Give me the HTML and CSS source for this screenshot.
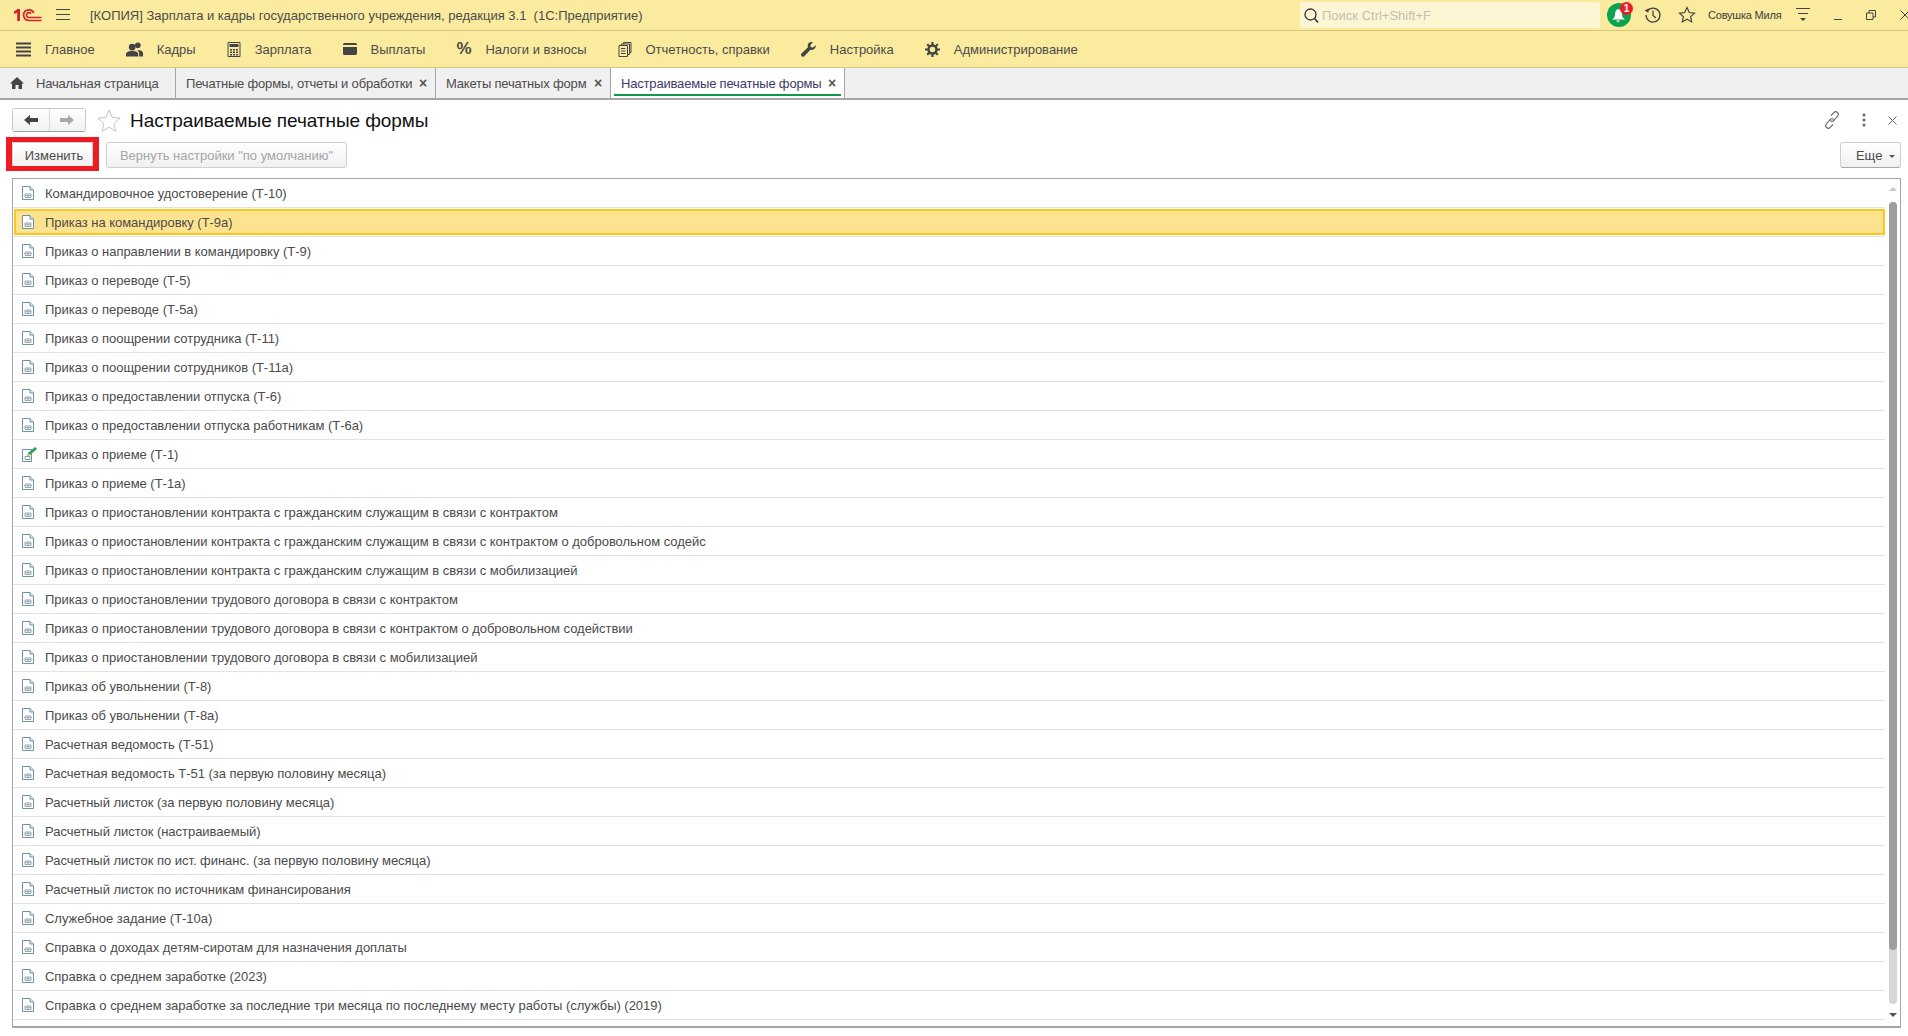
FILE: index.html
```html
<!DOCTYPE html>
<html lang="ru">

<head>
  <meta charset="UTF-8">
  <title>Настраиваемые печатные формы</title>
  <link rel="stylesheet" href="styles.css">
</head>

<body>
  <!-- Shared icons -->
  <svg class="defs" width="0" height="0">
    <symbol id="doc" viewBox="0 0 12 14">
      <path d="M.5.5h7.500l3.500 3.500v9.500H.5z" fill="#fff" stroke="#6d93a6"/>
      <path d="M8 .5V4h3.500" fill="#dbe6eb" stroke="#6d93a6"/>
      <path d="M3 8h6v3.500H3zM3 9.700h6M6 8v3.500" fill="none" stroke="#9aa8b0"/>
    </symbol>
  </svg>

  <div class="app">
    <!-- Title bar -->
    <header class="titlebar">
      <svg class="logo" width="30" height="14" viewBox="0 0 30 14">
        <path d="M1 3.500 4.500 1H7v12H4.200V4.500L1 6z" fill="#d6232b"/>
        <path d="M28.500 12.500H16a5.300 5.300 0 1 1 4.800-7.500M28.500 9.500H16a2.400 2.400 0 1 1 2-3.700" fill="none" stroke="#d6232b" stroke-width="1.700"/>
      </svg>
      <svg class="burger" width="14" height="12" viewBox="0 0 14 12">
        <path d="M0 .5h14M0 5.500h14M0 10.500h14" stroke="#444" stroke-width="1"/>
      </svg>
      <div class="app-title">[КОПИЯ] Зарплата и кадры государственного учреждения, редакция 3.1&nbsp; (1С:Предприятие)</div>
      <div class="search">
        <svg width="17" height="17" viewBox="0 0 17 17">
          <circle cx="7.500" cy="7.500" r="5.500" fill="none" stroke="#333" stroke-width="1.300"/>
          <path d="m11.500 11.500 3.500 4" stroke="#333" stroke-width="1.600"/>
        </svg>
        <span>Поиск Ctrl+Shift+F</span>
      </div>
      <div class="bell">
        <svg width="24" height="24" viewBox="0 0 24 24">
          <circle cx="12" cy="12" r="12" fill="#0da24f"/>
          <path d="M11 6c-2 .5-3 3-3 5.500 0 2-1 4-3 5h13c-2-1-3-3-3-5C15 9 14 6.500 11 6zM9 17.500h4l-2 2z" fill="#fff"/>
        </svg>
        <span class="badge">1</span>
      </div>
      <svg class="history" width="20" height="20" viewBox="0 0 20 20">
        <path d="M4.300 6A7 7 0 1 1 3 10" fill="none" stroke="#444" stroke-width="1.300"/>
        <path d="M1.500 5.500 5.500 3.500 5.500 7.800z" fill="#444"/>
        <path d="M10 5.500V10.500L13 13" fill="none" stroke="#444" stroke-width="1.300"/>
      </svg>
      <svg class="fav" width="18" height="18" viewBox="0 0 18 18">
        <path d="m9 1.500 2.300 5 5.200.6-3.900 3.500 1.100 5.300L9 13.200l-4.700 2.700 1.100-5.300L1.500 7.100l5.200-.6z" fill="none" stroke="#444" stroke-width="1.200"/>
      </svg>
      <span class="user">Совушка Миля</span>
      <svg class="user-menu" width="16" height="14" viewBox="0 0 16 14">
        <path d="M1 .5h14M3 5.500h10" stroke="#444"/>
        <path d="m5 10h6l-3 3z" fill="#444"/>
      </svg>
      <svg class="win-min" width="10" height="10" viewBox="0 0 10 10">
        <path d="M1 9.500h8" stroke="#444"/>
      </svg>
      <svg class="win-restore" width="10" height="10" viewBox="0 0 10 10">
        <path d="M.5 3h6.500v6.500H.5zM3 3V.5h6.500v6.500H7" fill="none" stroke="#444"/>
      </svg>
      <svg class="win-close" width="10" height="10" viewBox="0 0 10 10">
        <path d="m.5.5 9 9M9.500.5l-9 9" stroke="#444"/>
      </svg>
    </header>

    <!-- Sections menu -->
    <nav class="menu">
      <a class="menu-item">
        <svg width="15" height="15" viewBox="0 0 15 15"><path d="M0 1.500h15M0 5.500h15M0 9.500h15M0 13.500h15" stroke="#444" stroke-width="2"/></svg>
        Главное
      </a>
      <a class="menu-item">
        <svg width="17" height="15" viewBox="0 0 18 15" fill="#444"><circle cx="6.500" cy="5" r="3.500"/><path d="M0 15v-2.500c0-2 2-3.500 6.500-3.500s6.500 1.500 6.500 3.500V15z"/><circle cx="12.500" cy="3" r="3"/><path d="M14 15v-3c0-1.500-.8-2.700-2-3.500 3-.8 6 .5 6 3V15z"/></svg>
        Кадры
      </a>
      <a class="menu-item">
        <svg width="14" height="15" viewBox="0 0 13 15"><path d="M.5.500h12v14H.5z" fill="none" stroke="#444"/><path d="M2 2h9v3H2zM2.500 7h2v1.500h-2zM5.500 7h2v1.500h-2zM8.500 7h2v1.500h-2zM2.500 9.500h2V11h-2zM5.500 9.500h2V11h-2zM8.500 9.500h2V11h-2zM2.500 12h2v1.500h-2zM5.500 12h2v1.500h-2zM8.500 12h2v1.500h-2z" fill="#444"/></svg>
        Зарплата
      </a>
      <a class="menu-item">
        <svg width="14" height="12" viewBox="0 0 14 12"><path d="M0 1.500A1.500 1.500 0 0 1 1.500 0h11A1.500 1.500 0 0 1 14 1.500V2H0zM0 4h14v6.500a1.500 1.500 0 0 1-1.500 1.500h-11A1.500 1.500 0 0 1 0 10.500z" fill="#444"/></svg>
        Выплаты
      </a>
      <a class="menu-item">
        <span class="percent">%</span>
        Налоги и взносы
      </a>
      <a class="menu-item">
        <svg width="14" height="15" viewBox="0 0 13 15" fill="none" stroke="#444"><path d="M.5 3.500h8.500v11H.5zM3 3.500v-1.500h8v10.500H9M5 2V.5h7.500v10H11M2.500 6.500h4.500M2.500 9h4.500M2.500 11.500h4.500"/></svg>
        Отчетность, справки
      </a>
      <a class="menu-item">
        <svg width="15" height="15" viewBox="0 0 15 15"><path d="M14.700 3.200 12 5.600 9.800 5.200 9.400 3l2.500-2.700C9.500-.4 7 .8 6.700 3.200c-.1.800 0 1.400.3 2L.7 11.200c-1 1-.9 2.200 0 3 .9.800 2 .8 2.900-.1l5.800-6.400c2.900.9 6-1.500 5.300-4.500z" fill="#444"/></svg>
        Настройка
      </a>
      <a class="menu-item">
        <svg width="15" height="15" viewBox="0 0 15 15"><circle cx="7.500" cy="7.500" r="4" fill="none" stroke="#444" stroke-width="2.400"/><path d="M7.500 0v3M7.500 12v3M0 7.500h3M12 7.500h3M2.200 2.200l2.100 2.100M10.700 10.700l2.100 2.100M2.200 12.800l2.100-2.100M10.700 4.300l2.100-2.100" stroke="#444" stroke-width="2.200"/></svg>
        Администрирование
      </a>
    </nav>

    <!-- Open tabs -->
    <div class="tabs">
      <div class="tab tab-home">
        <svg width="14" height="12" viewBox="0 0 14 12"><path d="M7 0 0 6.500h2V12h3.500V8h3v4H12V6.500h2z" fill="#444"/></svg>
        Начальная страница
      </div>
      <div class="tab tab-print">Печатные формы, отчеты и обработки <span class="tab-close">×</span></div>
      <div class="tab tab-layouts">Макеты печатных форм <span class="tab-close">×</span></div>
      <div class="tab tab-active">Настраиваемые печатные формы <span class="tab-close">×</span></div>
    </div>

    <!-- Form -->
    <main class="form">
      <div class="form-head">
        <div class="nav-btns">
          <button class="nav-btn">
            <svg width="14" height="10" viewBox="0 0 14 10"><path d="M0 5 6 0v3h8v4H6v3z" fill="#444"/></svg>
          </button>
          <button class="nav-btn">
            <svg width="14" height="10" viewBox="0 0 14 10"><path d="M14 5 8 0v3H0v4h8v3z" fill="#a8a8a8"/></svg>
          </button>
        </div>
        <svg class="form-star" width="24" height="23" viewBox="0 0 24 23">
          <path d="m12 1 3.200 7.400 7.800.8-5.900 5.200 1.700 7.800L12 18.200l-6.800 4 1.700-7.800L1 9.200l7.800-.8z" fill="none" stroke="#c4c4c4"/>
        </svg>
        <h1>Настраиваемые печатные формы</h1>
        <div class="form-tools">
          <svg width="16" height="18" viewBox="0 0 16 18" fill="none" stroke="#666" stroke-width="1.100">
            <path d="M7 4.500 9.800 1.600a2.600 2.600 0 0 1 3.800 3.600L10 9.500a2.600 2.600 0 0 1-3.700 0"/>
            <path d="M9 13.500 6.200 16.400a2.600 2.600 0 0 1-3.800-3.600L6 8.500a2.600 2.600 0 0 1 3.700 0"/>
          </svg>
          <svg width="4" height="14" viewBox="0 0 4 14" fill="#666"><circle cx="2" cy="2" r="1.500"/><circle cx="2" cy="7" r="1.500"/><circle cx="2" cy="12" r="1.500"/></svg>
          <svg width="9" height="9" viewBox="0 0 9 9"><path d="m.5.500 8 8M8.500.500l-8 8" stroke="#666"/></svg>
        </div>
      </div>

      <div class="toolbar">
        <div class="marked">
          <button class="btn btn-change">Изменить</button>
          <span class="mark"></span>
        </div>
        <button class="btn btn-off">Вернуть настройки "по умолчанию"</button>
        <button class="btn btn-more">Еще <i class="caret"></i></button>
      </div>

      <!-- List of print forms -->
      <div class="table">
        <div class="rows">
          <div class="row"><svg class="row-icon"><use href="#doc"/></svg>Командировочное удостоверение (Т-10)</div>
          <div class="row row-selected"><div class="row-box"><svg class="row-icon"><use href="#doc"/></svg>Приказ на командировку (Т-9а)</div></div>
          <div class="row"><svg class="row-icon"><use href="#doc"/></svg>Приказ о направлении в командировку (Т-9)</div>
          <div class="row"><svg class="row-icon"><use href="#doc"/></svg>Приказ о переводе (Т-5)</div>
          <div class="row"><svg class="row-icon"><use href="#doc"/></svg>Приказ о переводе (Т-5а)</div>
          <div class="row"><svg class="row-icon"><use href="#doc"/></svg>Приказ о поощрении сотрудника (Т-11)</div>
          <div class="row"><svg class="row-icon"><use href="#doc"/></svg>Приказ о поощрении сотрудников (Т-11а)</div>
          <div class="row"><svg class="row-icon"><use href="#doc"/></svg>Приказ о предоставлении отпуска (Т-6)</div>
          <div class="row"><svg class="row-icon"><use href="#doc"/></svg>Приказ о предоставлении отпуска работникам (Т-6а)</div>
          <div class="row">
            <svg class="row-icon row-icon-edit" viewBox="0 0 15 15">
              <path d="M.5 2.500h9v12H.5z" fill="#fff" stroke="#6d93a6"/>
              <path d="M3 9.500h5v3H3z" fill="none" stroke="#8b9ca6"/>
              <path d="m5 9 1-3 7-6 2 2-7 6z" fill="#2ea44f"/>
              <path d="m5 9 1-3 2 2z" fill="#e0c080"/>
            </svg>
            Приказ о приеме (Т-1)
          </div>
          <div class="row"><svg class="row-icon"><use href="#doc"/></svg>Приказ о приеме (Т-1а)</div>
          <div class="row"><svg class="row-icon"><use href="#doc"/></svg>Приказ о приостановлении контракта с гражданским служащим в связи с контрактом</div>
          <div class="row"><svg class="row-icon"><use href="#doc"/></svg>Приказ о приостановлении контракта с гражданским служащим в связи с контрактом о добровольном содейс</div>
          <div class="row"><svg class="row-icon"><use href="#doc"/></svg>Приказ о приостановлении контракта с гражданским служащим в связи с мобилизацией</div>
          <div class="row"><svg class="row-icon"><use href="#doc"/></svg>Приказ о приостановлении трудового договора в связи с контрактом</div>
          <div class="row"><svg class="row-icon"><use href="#doc"/></svg>Приказ о приостановлении трудового договора в связи с контрактом о добровольном содействии</div>
          <div class="row"><svg class="row-icon"><use href="#doc"/></svg>Приказ о приостановлении трудового договора в связи с мобилизацией</div>
          <div class="row"><svg class="row-icon"><use href="#doc"/></svg>Приказ об увольнении (Т-8)</div>
          <div class="row"><svg class="row-icon"><use href="#doc"/></svg>Приказ об увольнении (Т-8а)</div>
          <div class="row"><svg class="row-icon"><use href="#doc"/></svg>Расчетная ведомость (Т-51)</div>
          <div class="row"><svg class="row-icon"><use href="#doc"/></svg>Расчетная ведомость Т-51 (за первую половину месяца)</div>
          <div class="row"><svg class="row-icon"><use href="#doc"/></svg>Расчетный листок (за первую половину месяца)</div>
          <div class="row"><svg class="row-icon"><use href="#doc"/></svg>Расчетный листок (настраиваемый)</div>
          <div class="row"><svg class="row-icon"><use href="#doc"/></svg>Расчетный листок по ист. финанс. (за первую половину месяца)</div>
          <div class="row"><svg class="row-icon"><use href="#doc"/></svg>Расчетный листок по источникам финансирования</div>
          <div class="row"><svg class="row-icon"><use href="#doc"/></svg>Служебное задание (Т-10а)</div>
          <div class="row"><svg class="row-icon"><use href="#doc"/></svg>Справка о доходах детям-сиротам для назначения доплаты</div>
          <div class="row"><svg class="row-icon"><use href="#doc"/></svg>Справка о среднем заработке (2023)</div>
          <div class="row"><svg class="row-icon"><use href="#doc"/></svg>Справка о среднем заработке за последние три месяца по последнему месту работы (службы) (2019)</div>
        </div>
        <div class="scroll">
          <i class="arrow-up"></i>
          <div class="track"><div class="thumb"></div></div>
          <i class="arrow-down"></i>
        </div>
      </div>
    </main>
  </div>
</body>

</html>
```

FILE: styles.css
```css
body {
  font-family: "Liberation Sans", Arial, sans-serif;
  font-size: 13px;
  color: #4b4b4b;
  margin: 0;
  padding: 0;
  background: white;
}

.defs {
  position: absolute;
}

.app {
  height: 1036px;
  overflow: hidden;
  display: flex;
  flex-direction: column;
}

/* Title bar */
.titlebar {
  height: 30px;
  flex: none;
  display: flex;
  align-items: center;
  background: #fbeb9f;
  border-bottom: 1px solid #d6c77c;
  overflow: hidden;
}

.titlebar > * {
  flex: none;
}

.logo {
  margin-left: 13px;
}

.burger {
  margin-left: 13px;
}

.app-title {
  margin-left: 20px;
  width: 1210px;
  white-space: nowrap;
}

.search {
  width: 300px;
  height: 26px;
  box-sizing: border-box;
  padding-left: 3px;
  display: flex;
  align-items: center;
  gap: 2px;
  background: #fdf6d5;
  border-radius: 2px;
  color: #c4c0ae;
}

.bell {
  position: relative;
  width: 24px;
  height: 24px;
  margin-left: 7px;
}

.bell svg {
  display: block;
}

.badge {
  position: absolute;
  top: -1px;
  right: -2px;
  width: 13px;
  height: 13px;
  border-radius: 50%;
  background: #ee1c25;
  color: white;
  font-size: 10px;
  font-weight: bold;
  line-height: 13px;
  text-align: center;
}

.history {
  margin-left: 12px;
}

.fav {
  margin-left: 15px;
}

.user {
  margin-left: 12px;
  width: 78px;
  font-size: 11px;
  letter-spacing: -0.2px;
  white-space: nowrap;
  color: #3c3c3c;
}

.user-menu {
  margin-left: 9px;
}

.win-min {
  margin-left: 22px;
}

.win-restore {
  margin-left: 23px;
}

.win-close {
  margin-left: 24px;
}

/* Sections menu */
.menu {
  height: 36px;
  flex: none;
  display: flex;
  align-items: center;
  padding-left: 16px;
  gap: 31px;
  background: #fbeb9f;
  border-bottom: 1px solid #d6c77c;
}

.menu-item {
  display: flex;
  align-items: center;
  gap: 14px;
}

.percent {
  width: 15px;
  font-size: 17px;
  font-weight: bold;
}

/* Open tabs */
.tabs {
  height: 30px;
  flex: none;
  display: flex;
  background: #f0f0f0;
  border-bottom: 2px solid #a6a6a6;
  letter-spacing: -0.18px;
}

.tab {
  position: relative;
  box-sizing: border-box;
  display: flex;
  align-items: center;
  white-space: nowrap;
  border-right: 1px solid #a6a6a6;
}

.tab-home {
  width: 176px;
  padding-left: 10px;
  gap: 12px;
}

.tab-print {
  width: 260px;
  padding-left: 10px;
}

.tab-layouts {
  width: 175px;
  padding-left: 10px;
}

.tab-active {
  width: 234px;
  padding-left: 10px;
  background: white;
  color: #3f3a66;
}

.tab-active::after {
  content: "";
  position: absolute;
  left: 3px;
  right: 3px;
  bottom: 2px;
  height: 2px;
  background: #0b9a4b;
}

.tab-close {
  position: absolute;
  right: 8px;
  font-size: 14px;
  font-weight: bold;
  color: #555;
}

/* Form */
.form {
  flex: 1;
  min-height: 0;
  display: flex;
  flex-direction: column;
  padding: 8px 7px 8px 12px;
}

.form-head {
  height: 24px;
  display: flex;
  align-items: center;
}

.nav-btns {
  width: 74px;
  height: 24px;
  box-sizing: border-box;
  display: flex;
  border: 1px solid #c8c8c8;
  border-bottom-color: #9c9c9c;
  border-radius: 3px;
}

.nav-btn {
  flex: 1;
  padding: 0;
  border: 0;
  background: linear-gradient(#fff, #f1f1f1);
}

.nav-btn + .nav-btn {
  border-left: 1px solid #d8d8d8;
}

.form-star {
  margin-left: 11px;
}

.form-head h1 {
  margin: 1px 0 0 9px;
  font-size: 19px;
  letter-spacing: -0.07px;
  font-weight: normal;
  color: #111;
}

.form-tools {
  margin-left: auto;
  display: flex;
  align-items: center;
  gap: 22px;
  padding-right: 4px;
}

.toolbar {
  height: 26px;
  margin-top: 10px;
  display: flex;
}

.btn {
  height: 26px;
  padding: 0;
  font: inherit;
  color: #4b4b4b;
  background: linear-gradient(#fff, #f0f0f0);
  border: 1px solid #cfcfcf;
  border-bottom-color: #a8a8a8;
  border-radius: 3px;
}

.btn-change {
  width: 81px;
  display: block;
  padding-left: 3px;
}

.btn-off {
  width: 241px;
  margin-left: 13px;
  color: #a6a6a6;
  border-bottom-color: #cfcfcf;
}

.btn-more {
  width: 61px;
  margin-left: auto;
  text-align: right;
  padding-right: 5px;
}

.caret {
  display: inline-block;
  margin-left: 3px;
  vertical-align: 2px;
  border: 3px solid transparent;
  border-top-color: #555;
  border-bottom: 0;
}

.marked {
  position: relative;
}

.mark {
  position: absolute;
  left: -6px;
  top: -5px;
  width: 93px;
  height: 34px;
  box-sizing: border-box;
  border: 5px solid #ed1c24;
  border-left-width: 6px;
  border-right-width: 6px;
}

/* List of print forms */
.table {
  margin-top: 10px;
  flex: 1;
  min-height: 0;
  display: flex;
  border: 1px solid #a6a6a6;
  border-bottom-width: 2px;
}

.rows {
  flex: 1;
  min-width: 0;
  letter-spacing: -0.03px;
}

.row {
  height: 29px;
  box-sizing: border-box;
  display: flex;
  align-items: center;
  padding-left: 9px;
  gap: 11px;
  white-space: nowrap;
  border-bottom: 1px solid #e3e3e3;
}

.row-icon {
  width: 12px;
  height: 14px;
  flex: none;
}

.row-icon-edit {
  width: 15px;
  height: 15px;
  margin-right: -3px;
}

.row-selected {
  padding: 1px 0 1px 1px;
  gap: 0;
}

.row-box {
  flex: 1;
  height: 26px;
  box-sizing: border-box;
  display: flex;
  align-items: center;
  gap: 11px;
  padding-left: 6px;
  background: #fde38f;
  border: 2px solid #fcc81f;
}

.scroll {
  width: 14px;
  flex: none;
  display: flex;
  flex-direction: column;
  align-items: center;
  padding-left: 1px;
}

.arrow-up,
.arrow-down {
  flex: none;
  border: 4px solid transparent;
}

.arrow-up {
  margin-top: 8px;
  border-top: 0;
  border-bottom: 4px solid #c8c8c8;
}

.arrow-down {
  margin: 9px 0 9px;
  border-bottom: 0;
  border-top: 4px solid #555;
}

.track {
  flex: 1;
  width: 8px;
  margin-top: 11px;
  background: #d6d6d6;
  border-radius: 4px;
}

.thumb {
  height: 748px;
  background: #9e9e9e;
  border-radius: 4px;
}
```
